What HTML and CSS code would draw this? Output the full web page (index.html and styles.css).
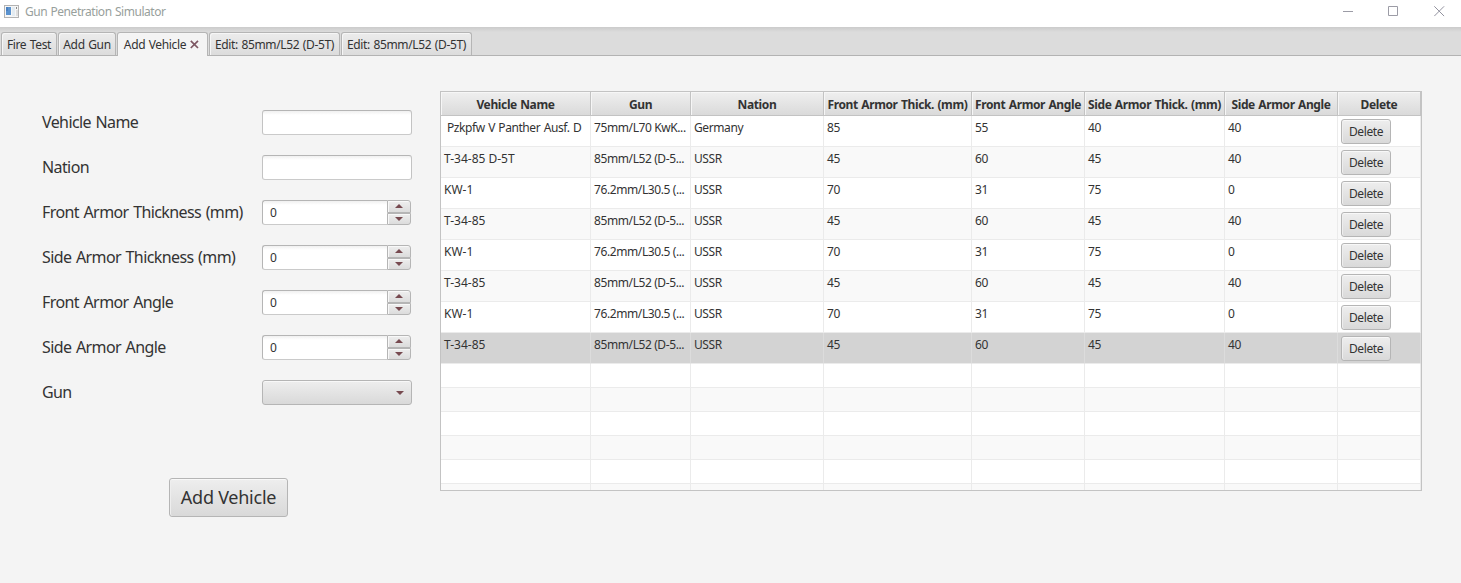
FILE: index.html
```
<!DOCTYPE html>
<html lang="en">
<head>
<meta charset="utf-8">
<title>Gun Penetration Simulator</title>
<link rel="stylesheet" href="styles.css">
</head>
<body>
<header class="titlebar">
  <svg class="app-icon" width="15" height="13" viewBox="0 0 15 13"><rect x=".5" y=".5" width="14" height="12" fill="#f6f6f6" stroke="#b3b3b3"/><path d="M2 2h5v8H2z" fill="#5b93cf"/><path d="M2 2h2v4H2z" fill="#4a80c0"/><path d="M8 2h3v9H8z" fill="#e3ebf1"/><path d="M12 2h1v2h-1z" fill="#888"/><path d="M12 5h2v6h-2z" fill="#dedede"/></svg>
  <span class="app-name">Gun Penetration Simulator</span>
  <div class="window-controls">
    <svg width="11" height="11" viewBox="0 0 11 11"><path d="M0 5.5h10" stroke="#9c9ca6"/></svg>
    <svg width="11" height="11" viewBox="0 0 11 11"><path d="M.5.5h9v9h-9z" fill="none" stroke="#9c9ca6"/></svg>
    <svg width="11" height="11" viewBox="0 0 11 11"><path d="M.3.3l9.8 9.8M10.1.3L.3 10.1" stroke="#92929e"/></svg>
  </div>
</header>
<nav class="tabs">
  <div class="tab tab-fire"><span>Fire Test</span></div>
  <div class="tab tab-gun"><span>Add Gun</span></div>
  <div class="tab tab-vehicle active"><span>Add Vehicle</span><svg width="9" height="9" viewBox="0 0 9 9"><path d="M.8.8l7.2 7.2M8 .8L.8 8" stroke="#7d5763" stroke-width="1.7"/></svg></div>
  <div class="tab tab-edit"><span>Edit: 85mm/L52 (D-5T)</span></div>
  <div class="tab tab-edit last"><span>Edit: 85mm/L52 (D-5T)</span></div>
</nav>
<main class="content">
  <form class="form">
    <div class="fields">
      <label>Vehicle Name</label><div class="input"></div>
      <label>Nation</label><div class="input"></div>
      <label>Front Armor Thickness (mm)</label><div class="spinner"><span class="value">0</span><span class="step"><i class="up"></i></span><span class="step"><i class="down"></i></span></div>
      <label>Side Armor Thickness (mm)</label><div class="spinner"><span class="value">0</span><span class="step"><i class="up"></i></span><span class="step"><i class="down"></i></span></div>
      <label>Front Armor Angle</label><div class="spinner"><span class="value">0</span><span class="step"><i class="up"></i></span><span class="step"><i class="down"></i></span></div>
      <label>Side Armor Angle</label><div class="spinner"><span class="value">0</span><span class="step"><i class="up"></i></span><span class="step"><i class="down"></i></span></div>
      <label>Gun</label><div class="combo"><i class="down"></i></div>
    </div>
    <div class="btn submit"><span>Add Vehicle</span></div>
  </form>
  <section class="table">
    <div class="row head"><b>Vehicle Name</b><b>Gun</b><b>Nation</b><b>Front Armor Thick. (mm)</b><b>Front Armor Angle</b><b>Side Armor Thick. (mm)</b><b>Side Armor Angle</b><b>Delete</b></div>
    <div class="row"><span class="indent">Pzkpfw V Panther Ausf. D</span><span>75mm/L70 KwK...</span><span>Germany</span><span>85</span><span>55</span><span>40</span><span>40</span><span><em class="btn">Delete</em></span></div>
    <div class="row odd"><span>T-34-85 D-5T</span><span>85mm/L52 (D-5...</span><span>USSR</span><span>45</span><span>60</span><span>45</span><span>40</span><span><em class="btn">Delete</em></span></div>
    <div class="row"><span>KW-1</span><span>76.2mm/L30.5 (...</span><span>USSR</span><span>70</span><span>31</span><span>75</span><span>0</span><span><em class="btn">Delete</em></span></div>
    <div class="row odd"><span>T-34-85</span><span>85mm/L52 (D-5...</span><span>USSR</span><span>45</span><span>60</span><span>45</span><span>40</span><span><em class="btn">Delete</em></span></div>
    <div class="row"><span>KW-1</span><span>76.2mm/L30.5 (...</span><span>USSR</span><span>70</span><span>31</span><span>75</span><span>0</span><span><em class="btn">Delete</em></span></div>
    <div class="row odd"><span>T-34-85</span><span>85mm/L52 (D-5...</span><span>USSR</span><span>45</span><span>60</span><span>45</span><span>40</span><span><em class="btn">Delete</em></span></div>
    <div class="row"><span>KW-1</span><span>76.2mm/L30.5 (...</span><span>USSR</span><span>70</span><span>31</span><span>75</span><span>0</span><span><em class="btn">Delete</em></span></div>
    <div class="row selected"><span>T-34-85</span><span>85mm/L52 (D-5...</span><span>USSR</span><span>45</span><span>60</span><span>45</span><span>40</span><span><em class="btn">Delete</em></span></div>
    <div class="row empty"><span></span><span></span><span></span><span></span><span></span><span></span><span></span><span></span></div>
    <div class="row empty odd"><span></span><span></span><span></span><span></span><span></span><span></span><span></span><span></span></div>
    <div class="row empty"><span></span><span></span><span></span><span></span><span></span><span></span><span></span><span></span></div>
    <div class="row empty odd"><span></span><span></span><span></span><span></span><span></span><span></span><span></span><span></span></div>
    <div class="row empty"><span></span><span></span><span></span><span></span><span></span><span></span><span></span><span></span></div>
    <div class="row empty odd"><span></span><span></span><span></span><span></span><span></span><span></span><span></span><span></span></div>
  </section>
</main>
</body>
</html>
```
FILE: styles.css
```
* { box-sizing: border-box; }
body {
  margin: 0;
  height: 583px;
  overflow: hidden;
  background: #f4f4f4;
  color: #333;
  font: 12px/16px "Noto Sans", sans-serif;
  letter-spacing: -0.4px;
}
.titlebar {
  display: flex;
  align-items: center;
  height: 27px;
  padding: 0 16px 4px 4px;
  background: #fff;
}
.app-icon { margin: 0 6px 1px 0; }
.app-name { color: #98a09c; letter-spacing: -0.45px; word-spacing: 0.6px; }
.window-controls { display: flex; gap: 34px; margin-left: auto; }
.window-controls svg { display: block; }
.window-controls svg:last-child { margin-left: 1px; }
.tabs {
  display: flex;
  height: 29px;
  padding: 5px 0 0 1px;
  border-bottom: 1px solid #b3b3b3;
  background: linear-gradient(#cbcbcb, #dcdcdc 5px);
}
.tab {
  display: flex;
  justify-content: center;
  align-items: center;
  height: 23px;
  margin-right: 1px;
  padding-top: 2px;
  border: 1px solid #b5b5b5;
  border-bottom: 0;
  border-radius: 3px 3px 0 0;
  background: linear-gradient(#ececec, #dcdcdc);
  box-shadow: inset 1px 1px #f6f6f6;
  letter-spacing: -0.36px;
  word-spacing: 0.8px;
  white-space: nowrap;
}
.tab-fire { width: 56px; }
.tab-gun { width: 58px; }
.tab-vehicle { width: 91px; gap: 4px; padding-right: 2px; }
.tab-vehicle svg { margin-bottom: 1px; }
.tab-edit { width: 131px; }
.active { height: 24px; padding-bottom: 1px; background: #f4f4f4; }
.content { display: flex; padding-top: 35px; }
.form { display: flex; flex-direction: column; width: 440px; padding: 9px 0 0 42px; }
.fields {
  display: grid;
  grid-template-columns: 220px 150px;
  grid-auto-rows: 45px;
  align-items: center;
}
.fields label {
  padding-bottom: 2px;
  font-size: 16px;
  line-height: 24px;
  letter-spacing: -0.6px;
  word-spacing: 1px;
  white-space: nowrap;
}
.input, .combo { height: 25px; border: 1px solid #bbb; border-radius: 3px; }
.input { background: linear-gradient(#f0f0f0, #fff 4px); border-color: #b5b5b5 #c3c3c3 #cacaca; }
.spinner {
  display: grid;
  grid-template: 13px 12px / 125px 24px;
  width: 149px;
  height: 25px;
}
.value {
  grid-row: 1 / 3;
  padding: 4px 0 0 7px;
  border: 1px solid #b5b5b5;
  border-right: 0;
  border-bottom-color: #cacaca;
  border-radius: 3px 0 0 3px;
  background: linear-gradient(#f0f0f0, #fff 4px);
}
.step {
  display: flex;
  justify-content: center;
  align-items: center;
  border: 1px solid #b5b5b5;
  background: linear-gradient(#eee, #dcdcdc);
  box-shadow: inset 1px 1px #f8f8f8;
}
.step:nth-child(2) { border-radius: 0 3px 0 0; padding-bottom: 1px; }
.step:nth-child(3) { border-radius: 0 0 3px 0; }
.up, .down { width: 0; height: 0; border: 4px solid transparent; }
.up { border-top: 0; border-bottom-color: #774a50; }
.down { border-bottom: 0; border-top-color: #774a50; }
.combo {
  display: flex;
  justify-content: flex-end;
  align-items: center;
  padding-right: 7px;
  border-color: #b5b5b5;
  background: linear-gradient(#eee, #d9d9d9);
  box-shadow: inset 0 1px #f8f8f8;
}
.btn {
  display: flex;
  justify-content: center;
  align-items: center;
  width: 50px;
  height: 25px;
  border: 1px solid #b5b5b5;
  border-radius: 3px;
  background: linear-gradient(#eee, #d9d9d9);
  box-shadow: inset 0 1px #f8f8f8, inset 1px 0 #eee;
  font-style: normal;
  letter-spacing: -0.4px;
}
.submit {
  width: 119px;
  height: 39px;
  margin: 63px 0 0 127px;
  padding-bottom: 2px;
  font-size: 18px;
  letter-spacing: -0.25px;
  white-space: nowrap;
}
.table { width: 982px; height: 400px; border: 1px solid #c3c3c3; overflow: hidden; }
.row {
  display: grid;
  grid-template-columns: 150px 100px 133px 148px 113px 140px 113px 83px;
  height: 31px;
  background: #fff;
}
.row > span {
  padding: 4px 0 0 3px;
  border: solid #ebebeb;
  border-width: 0 1px 1px 0;
  white-space: nowrap;
}
/* Vehicle designations are set slightly looser than the other cells */
.row > span:first-child { letter-spacing: 0; }
.row > .indent:first-child { padding-left: 6px; letter-spacing: -0.42px; word-spacing: 0.7px; }
.row .btn { margin-top: -1px; }
.odd { background: #f9f9f9; }
.selected { background: #d3d3d3; }
.selected > span { border-right-color: #dcdcdc; }
.empty { height: 24px; }
.head { height: 24px; letter-spacing: -0.37px; word-spacing: 0.6px; }
.head b {
  display: flex;
  justify-content: center;
  align-items: center;
  padding-top: 2px;
  border: solid #c3c3c3;
  border-width: 0 1px 1px 0;
  background: linear-gradient(#efefef, #dadada);
  box-shadow: inset 1px 1px #f6f6f6;
  white-space: nowrap;
}
```
